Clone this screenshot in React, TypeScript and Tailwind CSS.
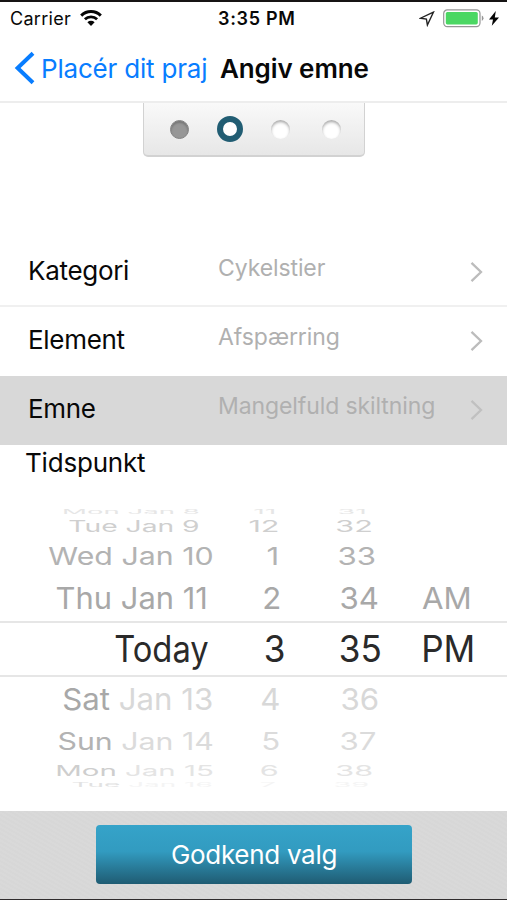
import React from "react"

interface PickerRow {
  values: string[]
  // right edge of each column, the wheel bulges towards the middle
  edges: number[]
  dateScaleX: number
  scaleX: number
  scaleY: number
  rowClass: string
  color: string
  dayColor?: string
}

const pickerRows: PickerRow[] = [
  {
    values: ["Mon Jan 8", "11", "31"],
    edges: [200, 276, 367],
    dateScaleX: 0.92,
    scaleX: 0.95,
    scaleY: 0.2,
    rowClass: "h-[6px]",
    color: "text-[#e6e6e6]",
  },
  {
    values: ["Tue Jan 9", "12", "32"],
    edges: [200, 279, 373],
    dateScaleX: 0.94,
    scaleX: 1.02,
    scaleY: 0.52,
    rowClass: "h-[22px]",
    color: "text-[#cfcfcf]",
  },
  {
    values: ["Wed Jan 10", "1", "33"],
    edges: [214, 279, 376],
    dateScaleX: 1.01,
    scaleX: 1.04,
    scaleY: 0.82,
    rowClass: "h-[38px]",
    color: "text-[#b3b3b3]",
  },
  {
    values: ["Thu Jan 11", "2", "34", "AM"],
    edges: [208, 281, 379, 472],
    dateScaleX: 1.03,
    scaleX: 1.04,
    scaleY: 1,
    rowClass: "h-[46px]",
    color: "text-[#a8a8a8]",
  },
  {
    values: ["Today", "3", "35", "PM"],
    edges: [209, 286, 382, 475],
    dateScaleX: 1.09,
    scaleX: 1.17,
    scaleY: 1.21,
    rowClass: "h-[56px] border-y-2 border-[#e6e6e6]",
    color: "text-[#2a2a2a]",
  },
  {
    values: ["Sat Jan 13", "4", "36"],
    edges: [213, 280, 379],
    dateScaleX: 1.04,
    scaleX: 1.04,
    scaleY: 1,
    rowClass: "h-[43px]",
    color: "text-[#d8d8d8]",
    dayColor: "text-[#a8a8a8]",
  },
  {
    values: ["Sun Jan 14", "5", "37"],
    edges: [214, 280, 377],
    dateScaleX: 1.01,
    scaleX: 1.04,
    scaleY: 0.79,
    rowClass: "h-[41px]",
    color: "text-[#dbdbdb]",
    dayColor: "text-[#b3b3b3]",
  },
  {
    values: ["Mon Jan 15", "6", "38"],
    edges: [214, 279, 373],
    dateScaleX: 0.98,
    scaleX: 1.02,
    scaleY: 0.48,
    rowClass: "h-[20px]",
    color: "text-[#e4e4e4]",
    dayColor: "text-[#cecece]",
  },
  {
    values: ["Tue Jan 16", "7", "39"],
    edges: [213, 276, 369],
    dateScaleX: 0.93,
    scaleX: 0.96,
    scaleY: 0.2,
    rowClass: "h-[8px]",
    color: "text-[#f4f4f4]",
    dayColor: "text-[#e2e2e2]",
  },
]

const StatusBar: React.FC = () => (
  <div className="flex h-[35px] items-center border-t-2 border-[#161414] pl-[10px] text-[18px]">
    <span className="w-[60px] tracking-[0.3px]">Carrier</span>
    <svg className="ml-[10px] h-[17px] w-[22px]" viewBox="0 0 22 17" fill="none">
      <path d="M1.2 5.6a14 14 0 0 1 19.6 0" stroke="#050505" strokeWidth="3" />
      <path d="M4.9 9.3a8.8 8.8 0 0 1 12.2 0" stroke="#050505" strokeWidth="2.8" />
      <path d="M11 16l-3.6-3.7a5.2 5.2 0 0 1 7.2 0z" fill="#050505" />
    </svg>
    <span className="ml-[116px] whitespace-nowrap font-semibold tracking-[0.7px]">3:35 PM</span>
    <svg className="ml-auto h-[16px] w-[16px]" viewBox="0 0 16 16" fill="none">
      <path d="M14.4 1.2L1.5 7.2L7.4 8.1L8.4 14Z" stroke="#222" strokeWidth="1.4" />
    </svg>
    <svg className="ml-[8px] h-[19px] w-[42px]" viewBox="0 0 42 19">
      <rect x=".7" y=".9" width="36.3" height="16.8" rx="3.6" fill="#fff" stroke="#969696" strokeWidth="1.2" />
      <rect x="2.8" y="3" width="32" height="12.4" rx="1.6" fill="#4bd763" />
      <path d="M38.8 6.6a3 3 0 0 1 0 5.4z" fill="#969696" />
    </svg>
    <svg className="mr-[7px] ml-[3px] h-[17px] w-[12px]" viewBox="0 0 12 17">
      <path d="M7.8 1L1 9.4H5L3.8 15.8L11 7.4H6.8Z" fill="#050505" />
    </svg>
  </div>
)

const NavBar: React.FC = () => (
  <div className="flex h-[68px] items-center border-b-2 border-[#ededed] text-[26px]">
    <svg className="ml-[13px] h-[34px] w-[22px]" viewBox="0 0 22 34" fill="none">
      <path d="M20 2.2L4.6 17L20 31.8" stroke="#087dff" strokeWidth="4" />
    </svg>
    <span className="ml-[6px] w-[179px] whitespace-nowrap tracking-[-0.2px] text-[#087dff]">Placér dit praj</span>
    <span className="whitespace-nowrap font-semibold tracking-[-0.1px]">Angiv emne</span>
  </div>
)

const StepIndicator: React.FC = () => (
  <div className="mx-auto flex h-[54px] w-[222px] items-center rounded-b-[5px] border border-t-0 border-b-2 border-[#d2d2d2] bg-linear-to-b from-[#f9f9f9] to-[#e7e7e7] pl-[26px]">
    <div className="h-[19px] w-[19px] rounded-full border border-[#858585] bg-[#979797] shadow-[inset_0_2px_2px_#777]" />
    <div className="ml-[28px] h-[26px] w-[26px] rounded-full border-6 border-[#215d73] bg-white" />
    <div className="ml-[28px] h-[19px] w-[19px] rounded-full bg-white shadow-[inset_0_2px_3px_#aaa]" />
    <div className="ml-[32px] h-[19px] w-[19px] rounded-full bg-white shadow-[inset_0_2px_3px_#aaa]" />
  </div>
)

interface FieldRowProps {
  label: string
  value: string
  className: string
  arrow?: string
}

const FieldRow: React.FC<FieldRowProps> = ({ label, value, className, arrow = "#bcbcbc" }) => (
  <div className={`flex items-center pl-[28px] ${className}`}>
    <span className="w-[190px] text-[26px] tracking-[-0.3px]">{label}</span>
    <span className="w-[250px] pb-[3px] text-[23px] tracking-[-0.1px] text-[#b0b0b0]">{value}</span>
    <svg className="mt-[3px] h-[22px] w-[16px]" viewBox="0 0 16 22" fill="none">
      <path d="M3.5 1.8L13 11L3.5 20.2" stroke={arrow} strokeWidth="2.3" />
    </svg>
  </div>
)

const WheelRow: React.FC<{ row: PickerRow }> = ({ row }) => (
  <div className={`flex shrink-0 items-center ${row.rowClass} ${row.color}`}>
    {row.values.map((value, i) => {
      const width = row.edges[i] - (i > 0 ? row.edges[i - 1] : 0)
      const scaleX = i === 0 ? row.dateScaleX : row.scaleX
      return (
        <div key={value} className="flex shrink-0 justify-end" style={{ width }}>
          <span
            className="origin-right text-[30px] leading-[30px] whitespace-nowrap"
            style={{ transform: `scale(${scaleX}, ${row.scaleY})` }}
          >
            {row.dayColor && i === 0 ? (
              <>
                <span className={row.dayColor}>{value.slice(0, 3)}</span>
                {value.slice(3)}
              </>
            ) : (
              value
            )}
          </span>
        </div>
      )
    })}
  </div>
)

const App: React.FC = () => {
  return (
    <div className="flex h-[900px] w-[507px] flex-col overflow-hidden bg-white font-['Inter',sans-serif] text-[#080808]">
      <StatusBar />
      <NavBar />
      <StepIndicator />
      <div className="mt-[80px]">
        <FieldRow label="Kategori" value="Cykelstier" className="h-[70px] border-b-2 border-[#f0f0f0] pb-[2px]" />
        <FieldRow label="Element" value="Afspærring" className="h-[69px] pb-[5px]" />
        <FieldRow
          label="Emne"
          value="Mangelfuld skiltning"
          className="h-[69px] bg-[#d8d8d8] pb-[5px]"
          arrow="#c0c0c0"
        />
      </div>
      <div className="h-[64px] pl-[25px] text-[26px] leading-[36px] tracking-[-0.2px]">Tidspunkt</div>
      <div className="flex flex-col">
        {pickerRows.map((row) => (
          <WheelRow key={row.values[0]} row={row} />
        ))}
      </div>
      <div className="mt-auto flex h-[89px] border-b border-[#302c2d] bg-[repeating-linear-gradient(30deg,#d7d7d7_0px,#d7d7d7_2px,#d9d9d9_2px,#d9d9d9_4px)] pt-[14px] pl-[96px]">
        <button className="h-[59px] w-[316px] rounded-[4px] bg-linear-to-b from-[#35a3c9] via-[#329bc0] via-45% to-[#1f5c73] text-[26px] tracking-[-0.3px] text-white">
          Godkend valg
        </button>
      </div>
    </div>
  )
}

export default App
